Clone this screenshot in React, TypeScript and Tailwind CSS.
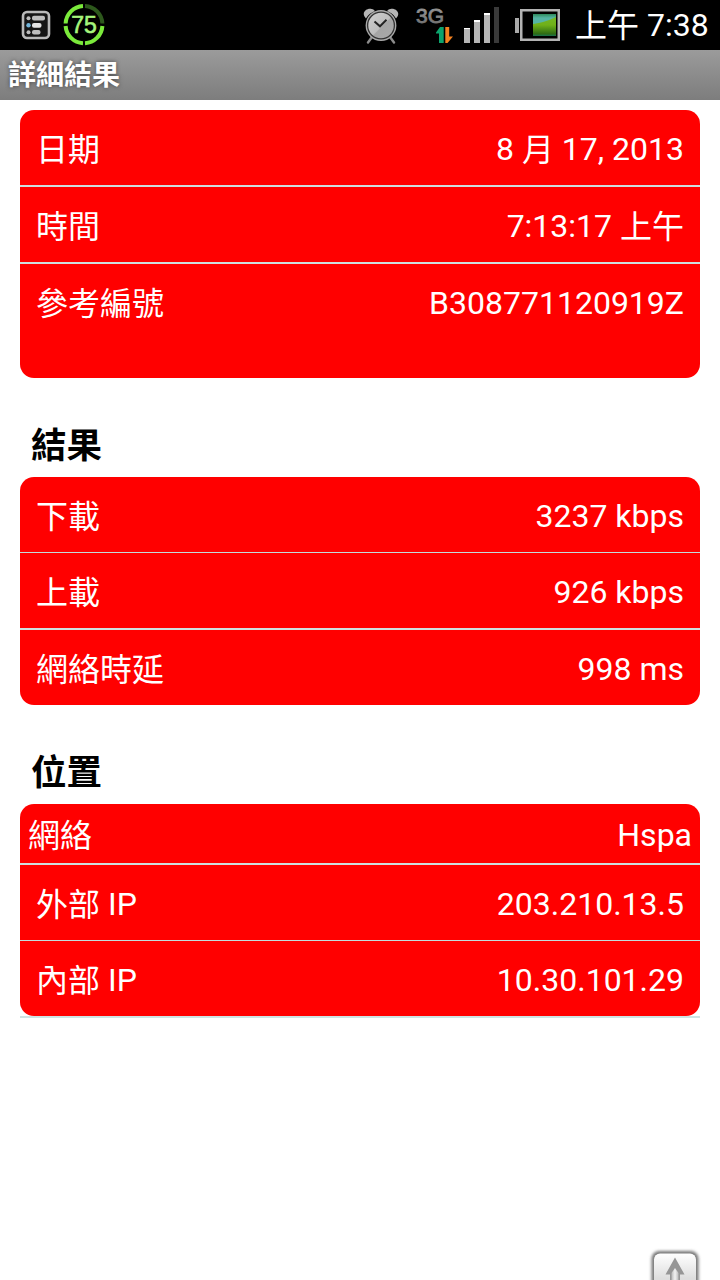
import React from "react";

type RowData = {
  label: string;
  value: string;
  box?: string;
};

const fontStack = "font-[Roboto,'Noto_Sans_CJK_TC',sans-serif]";

const ideographs = /([\u4e00-\u9fff]+)/;

/* Ideographs sit one pixel under the Latin baseline. */
function Mixed({ text }: { text: string }) {
  return (
    <span className="whitespace-pre">
      {text.split(ideographs).map((part, i) =>
        ideographs.test(part) ? (
          <span key={i} className="relative top-px">{part}</span>
        ) : (
          part
        ),
      )}
    </span>
  );
}

function Row({ label, value, box = "h-[75px] px-4 pt-5" }: RowData) {
  return (
    <div className={`flex shrink-0 items-start justify-between text-[32px] leading-[38px] text-white ${box}`}>
      <Mixed text={label} />
      <Mixed text={value} />
    </div>
  );
}

function Divider({ thin = false }: { thin?: boolean }) {
  return <div className={thin ? "h-px bg-[#c3dcdc]" : "h-0.5 bg-[#cfdfdf]"} />;
}

function Heading({ children }: { children: React.ReactNode }) {
  return <h2 className="pl-[31px] text-[35.5px] leading-[42px] font-bold text-black">{children}</h2>;
}

function ListIcon() {
  return (
    <svg width="30" height="30" viewBox="0 0 30 30">
      <rect x="2" y="2" width="26" height="26" rx="4" fill="#151515" stroke="#b9b9b9" strokeWidth="2.6" />
      <g fill="#bdbdbd">
        <circle cx="7.5" cy="8.2" r="2" />
        <rect x="11" y="5.8" width="13" height="4.8" rx="2" />
        <circle cx="7.5" cy="15.3" r="2.2" fill="#72b4da" />
        <rect x="11" y="12.9" width="9.5" height="4.8" rx="2" fill="#e4e4e4" />
        <circle cx="7.5" cy="22.3" r="2" />
        <rect x="11" y="20" width="8.5" height="4.6" rx="2" />
      </g>
    </svg>
  );
}

function BatteryRing() {
  return (
    <svg width="44" height="44" viewBox="0 0 44 44">
      <g fill="none" strokeWidth="4">
        <path d="M23 4 A18.5 18.5 0 0 1 40.4 21.5" stroke="#2d581c" />
        <path d="M40.4 24 A18.5 18.5 0 0 1 23 41.2" stroke="#7bea3b" />
        <path d="M21 41.2 A18.5 18.5 0 0 1 3.6 24" stroke="#7bea3b" />
        <path d="M3.6 21.5 A18.5 18.5 0 0 1 21 4" stroke="#7bea3b" />
      </g>
      <text x="22" y="31.3" textAnchor="middle" fontFamily="Liberation Sans" fontSize="23" fill="#a6f57c" stroke="#a6f57c" strokeWidth="0.6">
        75
      </text>
    </svg>
  );
}

function AlarmIcon() {
  return (
    <svg width="36" height="38" viewBox="0 0 36 38">
      <defs>
        <linearGradient id="dial" x1="0" y1="0" x2="1" y2="1">
          <stop offset="0" stopColor="#d0d0d0" />
          <stop offset="0.52" stopColor="#bdbdbd" />
          <stop offset="0.55" stopColor="#a5a5a5" />
          <stop offset="1" stopColor="#aaaaaa" />
        </linearGradient>
      </defs>
      <path d="M9 31 L5 36.5 M27 31 L31 36.5" stroke="#8b8b8b" strokeWidth="2.4" strokeLinecap="round" />
      <path d="M1.5 10.5 C-1.2 6 4 2 8.5 3 C10.5 3.2 11.3 4 12 5.2 C7.5 6.7 5.2 8.5 3 12.5 Z M34.5 10.5 C37.2 6 32 2 27.5 3 C25.5 3.2 24.7 4 24 5.2 C28.5 6.7 30.8 8.5 33 12.5 Z" fill="#b5b5b5" />
      <circle cx="18" cy="19.5" r="15.4" fill="#aaa" />
      <circle cx="18" cy="19.5" r="13.4" fill="url(#dial)" stroke="#333" strokeWidth="1.3" />
      <path d="M11.5 15.5 L17 20.3 L23.5 13.8" fill="none" stroke="#242424" strokeWidth="2" />
    </svg>
  );
}

function NetworkIcon() {
  return (
    <svg width="44" height="46" viewBox="-4 -6 44 46">
      <defs>
        <linearGradient id="net" x1="0" y1="0" x2="0" y2="1">
          <stop offset="0" stopColor="#a0a0a0" />
          <stop offset="1" stopColor="#6a6a6a" />
        </linearGradient>
      </defs>
      <text x="0" y="17" fontFamily="Liberation Sans" fontSize="21" fill="url(#net)" stroke="url(#net)" strokeWidth="0.8">
        3G
      </text>
      <path d="M20 26.5 L24 21 H27.7 V37 H23 V27.5 H20 Z" fill="#0ca46d" />
      <path d="M29.3 21 H33.2 V30.5 H37 L31.5 37 H29.3 Z" fill="#f58220" />
    </svg>
  );
}

function SignalIcon() {
  return (
    <svg width="36" height="38" viewBox="0 0 36 38" shapeRendering="crispEdges">
      <path d="M0 22 H6 V37 H0 Z M10 14 H16 V37 H10 Z M20 7 H26 V37 H20 Z" fill="#b5b5b5" />
      <path d="M0 22 H6 V23 H0 Z M10 14 H16 V16 H10 Z M20 7 H26 V9 H20 Z" fill="#fff" />
      <path d="M30 1 H35 V37 H30 Z" fill="#3a3a3a" />
    </svg>
  );
}

function BatteryIcon() {
  return (
    <svg width="46" height="34" viewBox="0 0 46 34">
      <defs>
        <linearGradient id="charge" x1="0" y1="0" x2="0" y2="1">
          <stop offset="0" stopColor="#76b82a" />
          <stop offset="0.5" stopColor="#70b018" />
          <stop offset="0.9" stopColor="#2e6b14" />
          <stop offset="1" stopColor="#197050" />
        </linearGradient>
        <linearGradient id="sky" x1="0" y1="0" x2="0" y2="1">
          <stop offset="0" stopColor="#2f8a5c" />
          <stop offset="0.4" stopColor="#55b4a4" />
          <stop offset="1" stopColor="#55b4a4" />
        </linearGradient>
      </defs>
      <rect x="0" y="10" width="4" height="15" fill="#aaa" />
      <rect x="6.25" y="2.25" width="37.5" height="29.5" fill="#000" stroke="#b3b3b3" strokeWidth="2.5" />
      <rect x="18" y="6" width="23" height="22" fill="url(#charge)" />
      <path d="M18 6 H41 V9 Q35 12 28 14 Q22 15.5 18 16 Z" fill="url(#sky)" />
    </svg>
  );
}

function ScrollTopButton() {
  return (
    <button aria-label="Top" className="absolute top-[1246px] left-[646px] h-[34px] w-[58px] overflow-hidden">
      <svg width="58" height="34" viewBox="0 0 58 34">
        <defs>
          <linearGradient id="face" x1="0" y1="0" x2="0" y2="1">
            <stop offset="0" stopColor="#fff" />
            <stop offset="0.5" stopColor="#dedede" />
          </linearGradient>
          <linearGradient id="stem" x1="0" y1="0" x2="1" y2="0">
            <stop offset="0" stopColor="#bbb" />
            <stop offset="0.5" stopColor="#f2f2f2" />
            <stop offset="1" stopColor="#bbb" />
          </linearGradient>
          <filter id="soft" x="-20%" y="-20%" width="140%" height="140%">
            <feGaussianBlur stdDeviation="1.6" />
          </filter>
        </defs>
        <rect x="5.5" y="5" width="47" height="50" rx="8" fill="#777" filter="url(#soft)" />
        <rect x="8" y="7.5" width="42" height="50" rx="6" fill="url(#face)" />
        <path d="M29 11.5 L38.5 28.5 H34 V40 H24 V28.5 H19.5 Z" fill="#969696" />
        <path d="M29 22 L32.5 27 V40 H25.5 V27 Z" fill="url(#stem)" />
      </svg>
    </button>
  );
}

export default function App() {
  return (
    <div className={`relative h-[1280px] w-[720px] overflow-hidden bg-white ${fontStack}`} lang="zh-Hant">
      <header className="flex h-[50px] items-start bg-black">
        <div className="pt-[10px] pl-[21px]"><ListIcon /></div>
        <div className="pt-[2px] pl-[11px]"><BatteryRing /></div>
        <div className="pt-[6px] pl-[257px]"><AlarmIcon /></div>
        <div className="pl-[13px]"><NetworkIcon /></div>
        <div className="pt-[6px] pl-[8px]"><SignalIcon /></div>
        <div className="pt-[8px] pl-[15px]"><BatteryIcon /></div>
        <div className="pt-[6px] pl-[14px] text-[32px] leading-[38px] whitespace-nowrap text-white">
          <Mixed text="上午 7:38" />
        </div>
      </header>
      <div className="h-[50px] bg-linear-to-b from-[#9b9b9b] to-[#7d7d7d] pt-[8px] pl-2 text-[28px] leading-[36px] font-bold text-white text-shadow-[0_0_4px_#444444]">
        詳細結果
      </div>

      <main>
        <section className="mx-5 mt-[10px] h-[268px] overflow-hidden rounded-[14px] bg-[#ff0000]">
          <Row label="日期" value="8 月 17, 2013" />
          <Divider />
          <Row label="時間" value="7:13:17 上午" />
          <Divider />
          <Row label="參考編號" value="B308771120919Z" box="h-[114px] px-4 pt-5" />
        </section>

        <div className="h-[99px] pt-[47px]"><Heading>結果</Heading></div>
        <section className="mx-5 h-[228px] overflow-hidden rounded-[14px] bg-[#ff0000]">
          <Row label="下載" value="3237 kbps" />
          <Divider thin />
          <Row label="上載" value="926 kbps" />
          <Divider />
          <Row label="網絡時延" value="998 ms" />
        </section>

        <div className="h-[99px] pt-[47px]"><Heading>位置</Heading></div>
        <section className="mx-5 h-[212px] overflow-hidden rounded-[14px] bg-[#ff0000]">
          <Row label="網絡" value="Hspa" box="h-[59px] px-2 pt-3" />
          <Divider />
          <Row label="外部 IP" value="203.210.13.5" />
          <Divider thin />
          <Row label="內部 IP" value="10.30.101.29" />
        </section>
        <div className="mx-5 h-0.5 bg-[#cfe3e3]" />
      </main>

      <ScrollTopButton />
    </div>
  );
}
